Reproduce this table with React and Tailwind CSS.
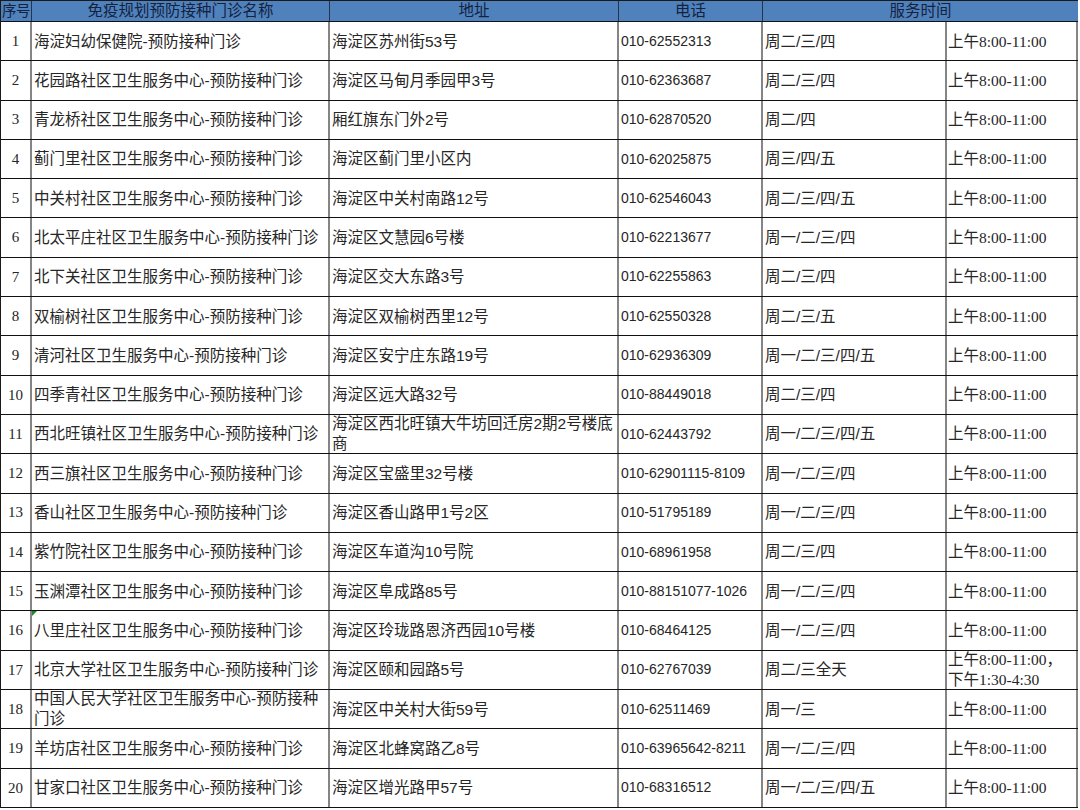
const rows = [
  ["1", "海淀妇幼保健院-预防接种门诊", "海淀区苏州街53号", "010-62552313", "周二/三/四", "上午8:00-11:00"],
  ["2", "花园路社区卫生服务中心-预防接种门诊", "海淀区马甸月季园甲3号", "010-62363687", "周二/三/四", "上午8:00-11:00"],
  ["3", "青龙桥社区卫生服务中心-预防接种门诊", "厢红旗东门外2号", "010-62870520", "周二/四", "上午8:00-11:00"],
  ["4", "蓟门里社区卫生服务中心-预防接种门诊", "海淀区蓟门里小区内", "010-62025875", "周三/四/五", "上午8:00-11:00"],
  ["5", "中关村社区卫生服务中心-预防接种门诊", "海淀区中关村南路12号", "010-62546043", "周二/三/四/五", "上午8:00-11:00"],
  ["6", "北太平庄社区卫生服务中心-预防接种门诊", "海淀区文慧园6号楼", "010-62213677", "周一/二/三/四", "上午8:00-11:00"],
  ["7", "北下关社区卫生服务中心-预防接种门诊", "海淀区交大东路3号", "010-62255863", "周二/三/四", "上午8:00-11:00"],
  ["8", "双榆树社区卫生服务中心-预防接种门诊", "海淀区双榆树西里12号", "010-62550328", "周二/三/五", "上午8:00-11:00"],
  ["9", "清河社区卫生服务中心-预防接种门诊", "海淀区安宁庄东路19号", "010-62936309", "周一/二/三/四/五", "上午8:00-11:00"],
  ["10", "四季青社区卫生服务中心-预防接种门诊", "海淀区远大路32号", "010-88449018", "周二/三/四", "上午8:00-11:00"],
  ["11", "西北旺镇社区卫生服务中心-预防接种门诊", ["海淀区西北旺镇大牛坊回迁房2期2号楼底", "商"], "010-62443792", "周一/二/三/四/五", "上午8:00-11:00"],
  ["12", "西三旗社区卫生服务中心-预防接种门诊", "海淀区宝盛里32号楼", "010-62901115-8109", "周一/二/三/四", "上午8:00-11:00"],
  ["13", "香山社区卫生服务中心-预防接种门诊", "海淀区香山路甲1号2区", "010-51795189", "周一/二/三/四", "上午8:00-11:00"],
  ["14", "紫竹院社区卫生服务中心-预防接种门诊", "海淀区车道沟10号院", "010-68961958", "周二/三/四", "上午8:00-11:00"],
  ["15", "玉渊潭社区卫生服务中心-预防接种门诊", "海淀区阜成路85号", "010-88151077-1026", "周一/二/三/四", "上午8:00-11:00"],
  ["16", "八里庄社区卫生服务中心-预防接种门诊", "海淀区玲珑路恩济西园10号楼", "010-68464125", "周一/二/三/四", "上午8:00-11:00"],
  ["17", "北京大学社区卫生服务中心-预防接种门诊", "海淀区颐和园路5号", "010-62767039", "周二/三全天", ["上午8:00-11:00，", "下午1:30-4:30"]],
  ["18", ["中国人民大学社区卫生服务中心-预防接种", "门诊"], "海淀区中关村大街59号", "010-62511469", "周一/三", "上午8:00-11:00"],
  ["19", "羊坊店社区卫生服务中心-预防接种门诊", "海淀区北蜂窝路乙8号", "010-63965642-8211", "周一/二/三/四", "上午8:00-11:00"],
  ["20", "甘家口社区卫生服务中心-预防接种门诊", "海淀区增光路甲57号", "010-68316512", "周一/二/三/四/五", "上午8:00-11:00"],
];

const sans = "font-['Liberation_Sans','Noto_Sans_CJK_SC',sans-serif]";
const cols = "grid grid-cols-[31px_298px_289px_144px_184px_131px]";

function Lines({ v }) {
  if (Array.isArray(v)) {
    return (
      <div className="leading-[20px]">
        {v.map((l) => (
          <div key={l} className="whitespace-nowrap">{l}</div>
        ))}
      </div>
    );
  }
  return <span className="whitespace-nowrap">{v}</span>;
}

function Time({ v }) {
  const lines = Array.isArray(v) ? v : [v];
  return (
    <div className={lines.length > 1 ? "leading-[20px]" : ""}>
      {lines.map((l) => (
        <div key={l} className="whitespace-nowrap">
          <span className="text-[15.5px]">{l.slice(0, 2)}</span>
          <span className="font-['Liberation_Serif','Noto_Sans_CJK_SC',serif] text-[15.5px]">{l.slice(2)}</span>
        </div>
      ))}
    </div>
  );
}

export default function App() {
  return (
    <div className={`w-[1080px] h-[810px] bg-white overflow-hidden text-[#262626] ${sans}`}>
      <div className="w-[1078px] border-l border-t border-[#1a1a1a]">
        <div className={`${cols} h-[21px] bg-[#4f81bd] border-b border-[#111] text-[#14223d] text-[15.5px] leading-[20px]`}>
          <div className="border-r border-[#24344f] text-[14.5px] text-center overflow-hidden whitespace-nowrap tracking-[-0.5px]">序号</div>
          <div className="border-r border-[#24344f] text-center">免疫规划预防接种门诊名称</div>
          <div className="border-r border-[#24344f] text-center">地址</div>
          <div className="border-r border-[#24344f] text-center">电话</div>
          <div className="col-span-2 text-center">服务时间</div>
        </div>
        {rows.map((r) => (
          <div key={r[0]} className={`${cols} h-[39.3px] border-b border-[#111] text-[15.5px]`}>
            <div className="border-r-2 border-[#858585] flex items-center justify-center font-['Liberation_Serif',serif] text-[15px]">{r[0]}</div>
            <div className="relative border-r-2 border-[#858585] flex items-center pl-[2px] overflow-hidden">
              {r[0] === "16" && (
                <span className="absolute left-0 top-0 w-0 h-0 border-t-[5px] border-r-[5px] border-t-[#1c8a2c] border-r-transparent" />
              )}
              <Lines v={r[1]} />
            </div>
            <div className="border-r-2 border-[#858585] flex items-center pl-[2px] overflow-hidden">
              <Lines v={r[2]} />
            </div>
            <div className="border-r-2 border-[#858585] flex items-center pl-[2px] text-[14px] overflow-hidden">
              <Lines v={r[3]} />
            </div>
            <div className="border-r-2 border-[#858585] flex items-center pl-[2px] overflow-hidden">
              <Lines v={r[4]} />
            </div>
            <div className="border-r-2 border-[#858585] flex items-center pl-[1px] overflow-hidden">
              <Time v={r[5]} />
            </div>
          </div>
        ))}
      </div>
    </div>
  );
}
